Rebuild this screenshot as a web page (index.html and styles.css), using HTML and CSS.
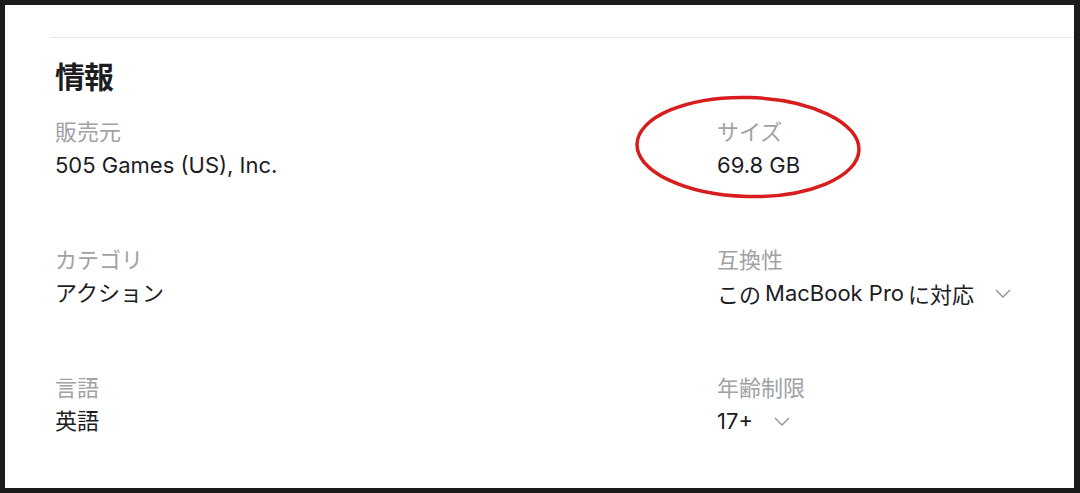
FILE: index.html
```html
<!DOCTYPE html>
<html lang="ja">
<head>
    <meta charset="UTF-8">
    <meta name="viewport" content="width=device-width, initial-scale=1.0">
    <title>情報</title>
    <link rel="stylesheet" href="styles.css">
</head>
<body>
    <div class="frame">
        <section class="info-section">
            <hr class="divider">
            <h2 class="section-title">情報</h2>

            <dl class="info-grid">
                <div class="info-item">
                    <dt class="info-label">販売元</dt>
                    <dd class="info-value">505 Games (US), Inc.</dd>
                </div>
                <div class="info-item highlighted">
                    <dt class="info-label">サイズ</dt>
                    <dd class="info-value">69.8 GB</dd>
                    <!-- 赤い丸 -->
                    <svg class="circle-mark" viewBox="0 0 230 108">
                        <ellipse cx="115" cy="54" rx="111" ry="49.5" transform="rotate(1.5 115 54)" fill="none" stroke="#d71d1d" stroke-width="3.5"/>
                    </svg>
                </div>

                <div class="info-item">
                    <dt class="info-label">カテゴリ</dt>
                    <dd class="info-value">アクション</dd>
                </div>
                <div class="info-item">
                    <dt class="info-label">互換性</dt>
                    <dd class="info-value">
                        <span class="jp">この</span><span class="latin">MacBook Pro</span><span class="jp">に対応</span>
                        <svg class="chevron" viewBox="0 0 16 9"><path d="M1 1 L8 8 L15 1" fill="none" stroke="#8e8e93" stroke-width="1.3"/></svg>
                    </dd>
                </div>

                <div class="info-item">
                    <dt class="info-label">言語</dt>
                    <dd class="info-value">英語</dd>
                </div>
                <div class="info-item">
                    <dt class="info-label">年齢制限</dt>
                    <dd class="info-value">
                        17+
                        <svg class="chevron" viewBox="0 0 16 9"><path d="M1 1 L8 8 L15 1" fill="none" stroke="#8e8e93" stroke-width="1.3"/></svg>
                    </dd>
                </div>
            </dl>
        </section>
    </div>
</body>
</html>
```

FILE: styles.css
```css
html, body {
    margin: 0;
    height: 100%;
}

body {
    background: #1b1b1b;
    font-family: Inter, "Noto Sans CJK JP", sans-serif;
    color: #1d1d1f;
}

.frame {
    background: #fff;
    margin: 5px 6px 0 5px;
    height: 483px;
    overflow: hidden;
}

.info-section {
    padding: 32px 0 0 45px;
}

.divider {
    border: none;
    border-top: 1px solid #e6e6e6;
    margin: 0;
}

.section-title {
    font-family: "Noto Sans CJK JP", sans-serif;
    font-size: 30px;
    line-height: 34px;
    font-weight: 700;
    margin: 20px 0 0 5px;
    letter-spacing: -1px;
}

.info-grid {
    display: grid;
    grid-template-columns: 662px 1fr;
    row-gap: 63px;
    margin: 23px 0 0 5px;
}

.info-item {
    position: relative;
}

.info-label {
    font-family: "Noto Sans CJK JP", sans-serif;
    font-size: 22px;
    line-height: 30px;
    color: #a1a1a6;
}

.info-value {
    margin: 5px 0 0;
    font-size: 22px;
    line-height: 30px;
    display: flex;
    align-items: center;
}

.jp {
    font-family: "Noto Sans CJK JP", sans-serif;
}

.latin {
    margin: 0 4px;
}

.chevron {
    width: 16px;
    height: 9px;
    margin-left: 21px;
}

.circle-mark {
    position: absolute;
    left: -84px;
    top: -22px;
    width: 230px;
    height: 108px;
}
```
